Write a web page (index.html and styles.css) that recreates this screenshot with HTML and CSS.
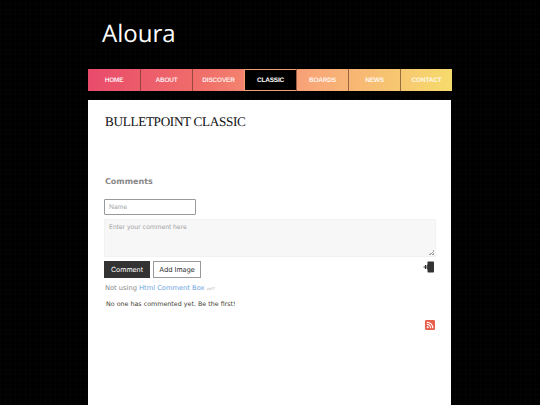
FILE: index.html
```html
<!DOCTYPE html>
<html lang="en">
<head>
<meta charset="utf-8">
<title>Aloura</title>
<link rel="stylesheet" href="styles.css">
</head>
<body>
<div class="page">
  <header class="site-title">Aloura</header>
  <nav class="nav">
    <a href="#">HOME</a>
    <a href="#">ABOUT</a>
    <a href="#">DISCOVER</a>
    <a href="#" class="active">CLASSIC</a>
    <a href="#">BOARDS</a>
    <a href="#">NEWS</a>
    <a href="#">CONTACT</a>
  </nav>
  <main class="content">
    <h1 class="post-title">BULLETPOINT CLASSIC</h1>
    <section class="comments">
      <h2 class="comments-title">Comments</h2>
      <input class="name-input" type="text" placeholder="Name">
      <textarea class="comment-input" placeholder="Enter your comment here"></textarea>
      <div class="actions">
        <button class="btn btn-dark" type="button">Comment</button>
        <button class="btn btn-light" type="button">Add Image</button>
        <svg class="login-icon" width="12" height="12" viewBox="0 0 12 12" aria-hidden="true">
          <rect x="4.5" y="0.5" width="6.5" height="11" rx="0.8" fill="#333"/>
          <path d="M0.5 6H6.5M4 4L6.5 6L4 8M2.5 4V8" fill="none" stroke="#333" stroke-width="1.2"/>
        </svg>
      </div>
      <p class="promo">Not using <a href="#">Html Comment Box</a> <span class="yet">yet?</span></p>
      <p class="empty">No one has commented yet. Be the first!</p>
      <div class="rss-row">
        <svg class="rss" width="10" height="10" viewBox="0 0 10 10" aria-hidden="true">
          <rect width="10" height="10" rx="1.2" fill="#e8604c"/>
          <circle cx="2.7" cy="7.3" r="1" fill="#fff"/>
          <path d="M1.8 4.4a3.8 3.8 0 0 1 3.8 3.8M1.8 2.2a6 6 0 0 1 6 6" fill="none" stroke="#fff" stroke-width="1.1"/>
        </svg>
      </div>
    </section>
  </main>
</div>
</body>
</html>
```
FILE: styles.css
```css
* { box-sizing: border-box; text-rendering: geometricPrecision; }
html, body { margin: 0; height: 100%; }
body {
  background-color: #000;
  background-image:
    repeating-linear-gradient(90deg, #040404 0 1px, transparent 1px 5px),
    repeating-linear-gradient(0deg, #030303 0 1px, transparent 1px 5px);
  overflow: hidden;
}
.page { width: 364px; margin-left: 88px; }
.site-title {
  height: 69px;
  padding: 17px 0 0 14px;
  font: 400 24px/34px "Open Sans", "DejaVu Sans", sans-serif;
  color: #fff;
}
.nav {
  display: grid;
  grid-template-columns: repeat(7, 1fr);
  height: 22px;
  background: linear-gradient(100deg, #e94a6b 0%, #f0706a 33%, #f8a878 62%, #f6dc6c 100%);
}
.nav a {
  display: flex;
  align-items: center;
  justify-content: center;
  padding-top: 1px;
  border-left: 1px solid rgba(90, 50, 30, 0.6);
  font: bold 6.5px "Liberation Sans", Arial, sans-serif;
  letter-spacing: -0.2px;
  color: rgba(255, 255, 255, 0.88);
  text-decoration: none;
}
.nav a:first-child { border-left: 0; }
.nav a.active {
  background: #000;
  border: 1px solid #f4a074;
  border-right: 0;
  color: #fff;
}
.content {
  width: 363px;
  height: 305px;
  margin-top: 9px;
  padding: 13px 15px 0 16px;
  background: #fff;
}
.post-title {
  margin: 0 0 0 1px;
  font: normal 13.2px/17px "Liberation Serif", "Times New Roman", serif;
  letter-spacing: -0.32px;
  color: #111;
}
.comments { margin-top: 46px; }
.comments-title {
  margin: 0 0 11px 1px;
  font: bold 8px/12px "DejaVu Sans", sans-serif;
  color: #888;
}
.name-input {
  display: block;
  width: 92px;
  height: 16px;
  padding: 0 4px;
  border: 1px solid #999;
  border-radius: 1px;
  font: 6.5px "Inter", sans-serif;
  outline: none;
}
.comment-input {
  display: block;
  width: 332px;
  height: 38px;
  margin-top: 4px;
  padding: 3px 4px;
  border: 1px solid #f2f2f2;
  background: #f7f7f7;
  font: 6.5px "Inter", sans-serif;
  outline: none;
}
.comment-input::-webkit-resizer {
  background: linear-gradient(135deg, transparent 50%, #aaa 50% 65%, transparent 65% 80%, #aaa 80%) right 1px bottom 1px / 5px 5px no-repeat;
}
.name-input::placeholder, .comment-input::placeholder { color: #a5a5a5; }
.actions {
  display: flex;
  align-items: flex-start;
  gap: 3px;
  margin-top: 4px;
  width: 332px;
}
.btn {
  height: 17px;
  padding: 0;
  border: 1px solid #999;
  font: 7px "Inter", sans-serif;
  color: #333;
  background: #fff;
}
.btn-dark { width: 46px; background: #333; border-color: #333; color: #fff; }
.btn-light { width: 48px; }
.login-icon { margin-left: auto; margin-right: 1px; }
.promo {
  margin: 4px 0 0 1px;
  font: 6.7px/12px "DejaVu Sans", sans-serif;
  color: #888;
}
.promo a { color: #6a9fe0; text-decoration: none; }
.yet { font-size: 4px; color: #bbb; }
.empty {
  margin: 4px 0 0 2px;
  font: 6.35px/12px "DejaVu Sans", sans-serif;
  color: #443;
}
.rss-row { display: flex; justify-content: flex-end; margin-top: 9px; width: 331px; }
.rss { display: block; }
```
